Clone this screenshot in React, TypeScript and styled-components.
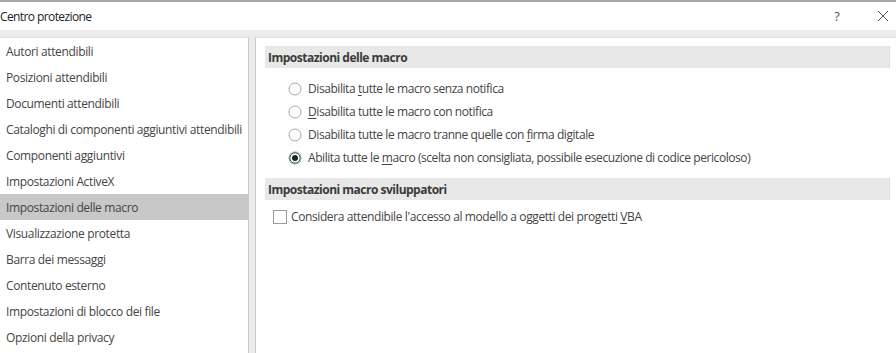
import React from "react";
import styled, { createGlobalStyle } from "styled-components";

const Global = createGlobalStyle`
  html, body { margin: 0; padding: 0; background: #ffffff; }
  body { font-family: "Segoe UI", "Open Sans", "Noto Sans", sans-serif; }
  #root { width: 896px; height: 353px; overflow: hidden; }
`;

const Dialog = styled.div`
  width: 896px;
  height: 353px;
  display: flex;
  flex-direction: column;
  border-top: 2px solid #a8a8a8;
  box-sizing: border-box;
  background: #ffffff;
`;

const TitleBar = styled.div`
  height: 28px;
  flex: none;
  display: flex;
  align-items: center;
  background: #ffffff;
  color: #222;
  font-size: 12px;
`;

const Title = styled.div`
  flex: 1;
  padding-left: 0;
  letter-spacing: -0.6px;
`;

const TitleButton = styled.div<{ $w: number; $mr?: number }>`
  width: ${(p) => p.$w}px;
  margin-right: ${(p) => p.$mr ?? 0}px;
  display: flex;
  align-items: center;
  justify-content: center;
  color: #555;
  font-size: 13px;
`;

const Body = styled.div`
  flex: 1;
  display: flex;
  background: #ececec;
  padding-top: 7px;
  gap: 6px;
  min-height: 0;
`;

const Sidebar = styled.div`
  width: 248px;
  flex: none;
  background: #ffffff;
  border-right: 1px solid #c9c9c9;
  border-top: 1px solid #e0e0e0;
  display: flex;
  flex-direction: column;
`;

const NavItem = styled.div<{ $sel?: boolean }>`
  height: 26px;
  flex: none;
  display: flex;
  align-items: center;
  padding-left: 6px;
  font-size: 12px;
  letter-spacing: -0.36px;
  color: #454545;
  background: ${(p) => (p.$sel ? "#c8c8c8" : "transparent")};
  white-space: nowrap;
`;

const Content = styled.div`
  flex: 1;
  background: #ffffff;
  border-left: 1px solid #c9c9c9;
  border-top: 1px solid #e0e0e0;
  padding: 8px 6px 0 9px;
  display: flex;
  flex-direction: column;
`;

const SectionHeader = styled.div<{ $mt: number }>`
  height: 22px;
  margin-top: ${(p) => p.$mt}px;
  background: #e8e8e8;
  border-right: 1px solid #dcdcdc;
  display: flex;
  align-items: center;
  padding-left: 3px;
  font-size: 12px;
  font-weight: 700;
  letter-spacing: -0.5px;
  color: #3a3a3a;
`;

const OptionList = styled.div`
  display: flex;
  flex-direction: column;
  padding-top: 9px;
  padding-left: 23px;
`;

const OptionRow = styled.label`
  height: 23px;
  display: flex;
  align-items: center;
  gap: 6px;
  font-size: 12px;
  letter-spacing: -0.43px;
  color: #454545;
`;

const CheckRow = styled(OptionRow)`
  margin-top: 5px;
  padding-left: 8px;
  gap: 4px;
  letter-spacing: -0.4px;
`;

const Key = styled.span`
  text-decoration: underline;
  text-underline-offset: 2px;
`;

const Radio = ({ checked }: { checked?: boolean }) => (
  <svg width="14" height="14" viewBox="0 0 14 14">
    {checked ? (
      <>
        <circle cx="7" cy="7" r="6.2" fill="#fff" stroke="#9fd3b8" strokeWidth="1.2" />
        <circle cx="7" cy="7" r="5.2" fill="#fff" stroke="#333" strokeWidth="0.9" />
        <circle cx="7" cy="7" r="3" fill="#222" />
      </>
    ) : (
      <circle cx="7" cy="7" r="6" fill="#fff" stroke="#a6a6a6" strokeWidth="1" />
    )}
  </svg>
);

const Check = () => (
  <svg width="14" height="14" viewBox="0 0 14 14">
    <rect x="0.5" y="0.5" width="13" height="13" fill="#fff" stroke="#9a9a9a" strokeWidth="1" />
  </svg>
);

const navItems = [
  "Autori attendibili",
  "Posizioni attendibili",
  "Documenti attendibili",
  "Cataloghi di componenti aggiuntivi attendibili",
  "Componenti aggiuntivi",
  "Impostazioni ActiveX",
  "Impostazioni delle macro",
  "Visualizzazione protetta",
  "Barra dei messaggi",
  "Contenuto esterno",
  "Impostazioni di blocco dei file",
  "Opzioni della privacy",
];

export default function App() {
  return (
    <>
      <Global />
      <Dialog>
        <TitleBar>
          <Title>Centro protezione</Title>
          <TitleButton $w={20} $mr={23}>?</TitleButton>
          <TitleButton $w={26}>
            <svg width="12" height="12" viewBox="0 0 12 12">
              <path d="M1 1 L11 11 M11 1 L1 11" stroke="#555" strokeWidth="1" />
            </svg>
          </TitleButton>
        </TitleBar>
        <Body>
          <Sidebar>
            {navItems.map((t) => (
              <NavItem key={t} $sel={t === "Impostazioni delle macro"}>
                {t}
              </NavItem>
            ))}
          </Sidebar>
          <Content>
            <SectionHeader $mt={0}>Impostazioni delle macro</SectionHeader>
            <OptionList>
              <OptionRow>
                <Radio />
                <span>
                  Disabilita <Key>t</Key>utte le macro senza notifica
                </span>
              </OptionRow>
              <OptionRow>
                <Radio />
                <span>
                  <Key>D</Key>isabilita tutte le macro con notifica
                </span>
              </OptionRow>
              <OptionRow>
                <Radio />
                <span>
                  Disabilita tutte le macro tranne quelle con <Key>f</Key>irma digitale
                </span>
              </OptionRow>
              <OptionRow>
                <Radio checked />
                <span>
                  Abilita tutte le <Key>m</Key>acro (scelta non consigliata, possibile esecuzione di codice pericoloso)
                </span>
              </OptionRow>
            </OptionList>
            <SectionHeader $mt={9}>Impostazioni macro sviluppatori</SectionHeader>
            <CheckRow>
              <Check />
              <span>
                Considera attendibile l'accesso al modello a oggetti dei progetti <Key>V</Key>BA
              </span>
            </CheckRow>
          </Content>
        </Body>
      </Dialog>
    </>
  );
}
